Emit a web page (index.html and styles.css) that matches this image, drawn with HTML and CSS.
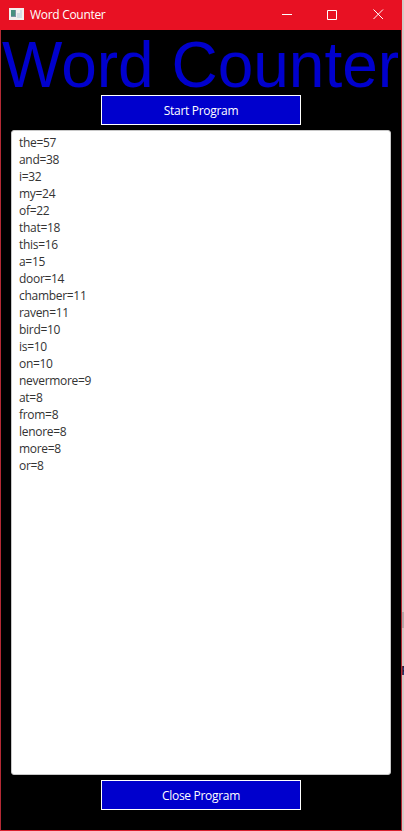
FILE: index.html
```
<!DOCTYPE html>
<html lang="en">
<head>
<meta charset="utf-8">
<title>Word Counter</title>
<link rel="stylesheet" href="styles.css">
</head>
<body>
<div class="desktop">
<main class="window">
  <header class="titlebar">
    <svg class="app-icon" width="15" height="12" viewBox="0 0 15 12">
      <path fill="#f3f0ee" d="M0 0h15v12H0z"/>
      <path fill="#46907f" d="M2 2h5v7H2z"/>
      <path fill="#7b91a5" d="M6 2h1v7H6zM2 8h5v1H2z"/>
      <path fill="#d5dde4" d="M8 5h3v5H8zM11 2h2v8h-2z"/>
    </svg>
    <span class="caption">Word Counter</span>
    <div class="controls">
      <svg class="control" viewBox="0 0 11 11"><path d="M1 5.5h10"/></svg>
      <svg class="control" viewBox="0 0 11 11"><path d="M.5 1.5h9v9h-9z"/></svg>
      <svg class="control" viewBox="0 0 11 11"><path d="M.5 .5l9.5 9.5M10 .5L.5 10"/></svg>
    </div>
  </header>
  <section class="content">
    <h1 class="heading">Word Counter</h1>
    <button class="button">Start Program</button>
    <pre class="results">the=57
and=38
i=32
my=24
of=22
that=18
this=16
a=15
door=14
chamber=11
raven=11
bird=10
is=10
on=10
nevermore=9
at=8
from=8
lenore=8
more=8
or=8</pre>
    <button class="button close">Close Program</button>
  </section>
</main>
<aside class="backdrop"><span class="shade"></span><span class="sliver">F</span></aside>
</div>
</body>
</html>
```
FILE: styles.css
```
* { box-sizing: border-box; }
body { margin: 0; }
.desktop {
  display: flex;
  width: 404px;
  height: 831px;
  overflow: hidden;
  font-family: "Open Sans", "Noto Sans", sans-serif;
  font-size: 12px;
  letter-spacing: -0.3px;
}
.window {
  display: flex;
  flex-direction: column;
  width: 402px;
  border: 1px solid #b32a35;
  border-top: 0;
  border-bottom-color: #d9202f;
  background: #000;
}
.titlebar {
  display: flex;
  align-items: center;
  height: 30px;
  margin: 0 -1px;
  padding-left: 9px;
  background: #e81123;
  color: #fff;
}
.app-icon { margin-top: -2px; }
.caption {
  margin-left: 6px;
  line-height: 30px;
}
.controls {
  display: flex;
  gap: 35px;
  margin: -2px 18px 0 auto;
}
.control {
  width: 11px;
  height: 11px;
  fill: none;
  stroke: #fff;
}
.content {
  display: flex;
  flex: 1;
  flex-direction: column;
  align-items: center;
}
.heading {
  height: 65px;
  margin: 0 0 0 -1px;
  color: #0000cd;
  font: 64px/71px "Liberation Sans", Arial, sans-serif;
  letter-spacing: 0;
  white-space: nowrap;
}
.button {
  width: 200px;
  height: 30px;
  padding: 0;
  border: 1px solid #fff;
  background: #0000cd;
  color: #fff;
  font: inherit;
  letter-spacing: inherit;
}
.close { padding-top: 1px; }
.results {
  width: 380px;
  height: 645px;
  margin: 5px 0;
  padding: 3px 7px;
  border: 1px solid #c8c8c8;
  border-radius: 3px;
  background: #fff;
  color: #333;
  font: inherit;
  line-height: 17px;
}
.backdrop {
  width: 2px;
  overflow: hidden;
  background: #d5c9c5;
}
.shade {
  display: block;
  height: 16px;
  margin-top: 612px;
  background: #b4a9a8;
}
.sliver {
  display: block;
  margin: 34px 0 0 -1px;
  color: #20203c;
  font-weight: 700;
}
```
